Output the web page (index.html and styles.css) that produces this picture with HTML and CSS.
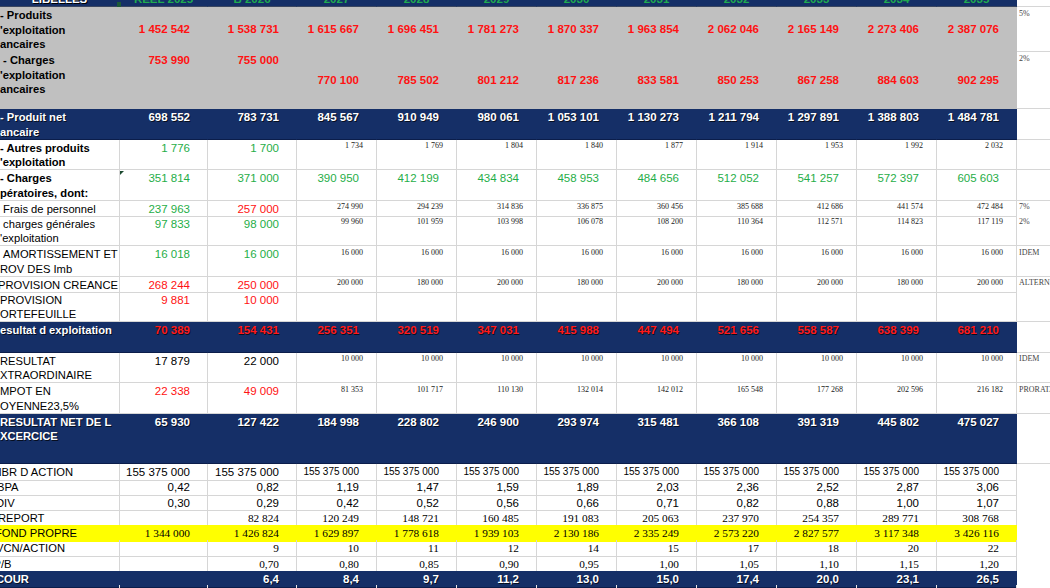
FILE: index.html
```html
<!DOCTYPE html>
<html lang="fr">
<head>
<meta charset="utf-8">
<title>Prévisions</title>
<link rel="stylesheet" href="styles.css">
</head>
<body>
<div class="sheet">
  <div class="row h7 head">
    <div class="c lab hl"><span class="w">LIBELLES</span></div>
    <div class="c hc sel"><span>REEL 2025</span><i class="handle"></i></div>
    <div class="c hc"><span>B 2026</span></div>
    <div class="c hc"><span>2027</span></div>
    <div class="c hc"><span>2028</span></div>
    <div class="c hc"><span>2029</span></div>
    <div class="c hc"><span>2030</span></div>
    <div class="c hc"><span>2031</span></div>
    <div class="c hc"><span>2032</span></div>
    <div class="c hc"><span>2033</span></div>
    <div class="c hc"><span>2034</span></div>
    <div class="c hc"><span>2035</span></div>
    <div class="c x"></div>
  </div>

  <div class="row h45 gray">
    <div class="c lab b">- Produits<br>'exploitation<br>ancaires</div>
    <div class="c b red m44">1 452 542</div>
    <div class="c b red m44">1 538 731</div>
    <div class="c b red m44">1 615 667</div>
    <div class="c b red m44">1 696 451</div>
    <div class="c b red m44">1 781 273</div>
    <div class="c b red m44">1 870 337</div>
    <div class="c b red m44">1 963 854</div>
    <div class="c b red m44">2 062 046</div>
    <div class="c b red m44">2 165 149</div>
    <div class="c b red m44">2 273 406</div>
    <div class="c b red m44">2 387 076</div>
    <div class="c x">5%</div>
  </div>

  <div class="row h57 gray">
    <div class="c lab b">&nbsp;- Charges<br>'exploitation<br>ancaires</div>
    <div class="c b red">753 990</div>
    <div class="c b red">755 000</div>
    <div class="c b red m56">770 100</div>
    <div class="c b red m56">785 502</div>
    <div class="c b red m56">801 212</div>
    <div class="c b red m56">817 236</div>
    <div class="c b red m56">833 581</div>
    <div class="c b red m56">850 253</div>
    <div class="c b red m56">867 258</div>
    <div class="c b red m56">884 603</div>
    <div class="c b red m56">902 295</div>
    <div class="c x">2%</div>
  </div>

  <div class="row h30 navy">
    <div class="c lab b">- Produit net<br>ancaire</div>
    <div class="c b">698 552</div>
    <div class="c b">783 731</div>
    <div class="c b">845 567</div>
    <div class="c b">910 949</div>
    <div class="c b">980 061</div>
    <div class="c b">1 053 101</div>
    <div class="c b">1 130 273</div>
    <div class="c b">1 211 794</div>
    <div class="c b">1 297 891</div>
    <div class="c b">1 388 803</div>
    <div class="c b">1 484 781</div>
    <div class="c x"></div>
  </div>

  <div class="row h30">
    <div class="c lab b">- Autres produits<br>'exploitation</div>
    <div class="c grn">1 776</div>
    <div class="c grn">1 700</div>
    <div class="c s">1 734</div>
    <div class="c s">1 769</div>
    <div class="c s">1 804</div>
    <div class="c s">1 840</div>
    <div class="c s">1 877</div>
    <div class="c s">1 914</div>
    <div class="c s">1 953</div>
    <div class="c s">1 992</div>
    <div class="c s">2 032</div>
    <div class="c x"></div>
  </div>

  <div class="row h30">
    <div class="c lab b">- Charges<br>pératoires, dont:</div>
    <div class="c grn cm">351 814</div>
    <div class="c grn">371 000</div>
    <div class="c grn">390 950</div>
    <div class="c grn">412 199</div>
    <div class="c grn">434 834</div>
    <div class="c grn">458 953</div>
    <div class="c grn">484 656</div>
    <div class="c grn">512 052</div>
    <div class="c grn">541 257</div>
    <div class="c grn">572 397</div>
    <div class="c grn">605 603</div>
    <div class="c x"></div>
  </div>

  <div class="row h15">
    <div class="c lab">&nbsp;Frais de personnel</div>
    <div class="c grn">237 963</div>
    <div class="c red">257 000</div>
    <div class="c s">274 990</div>
    <div class="c s">294 239</div>
    <div class="c s">314 836</div>
    <div class="c s">336 875</div>
    <div class="c s">360 456</div>
    <div class="c s">385 688</div>
    <div class="c s">412 686</div>
    <div class="c s">441 574</div>
    <div class="c s">472 484</div>
    <div class="c x">7%</div>
  </div>

  <div class="row h30">
    <div class="c lab">&nbsp;charges générales<br>'exploitation</div>
    <div class="c grn">97 833</div>
    <div class="c grn">98 000</div>
    <div class="c s">99 960</div>
    <div class="c s">101 959</div>
    <div class="c s">103 998</div>
    <div class="c s">106 078</div>
    <div class="c s">108 200</div>
    <div class="c s">110 364</div>
    <div class="c s">112 571</div>
    <div class="c s">114 823</div>
    <div class="c s">117 119</div>
    <div class="c x">2%</div>
  </div>

  <div class="row h30">
    <div class="c lab">&nbsp;AMORTISSEMENT ET<br>ROV DES Imb</div>
    <div class="c grn">16 018</div>
    <div class="c grn">16 000</div>
    <div class="c s">16 000</div>
    <div class="c s">16 000</div>
    <div class="c s">16 000</div>
    <div class="c s">16 000</div>
    <div class="c s">16 000</div>
    <div class="c s">16 000</div>
    <div class="c s">16 000</div>
    <div class="c s">16 000</div>
    <div class="c s">16 000</div>
    <div class="c x">IDEM</div>
  </div>

  <div class="row h15">
    <div class="c lab"><span class="k2">PROVISION CREANCE</span></div>
    <div class="c red">268 244</div>
    <div class="c red">250 000</div>
    <div class="c s">200 000</div>
    <div class="c s">180 000</div>
    <div class="c s">200 000</div>
    <div class="c s">180 000</div>
    <div class="c s">200 000</div>
    <div class="c s">180 000</div>
    <div class="c s">200 000</div>
    <div class="c s">180 000</div>
    <div class="c s">200 000</div>
    <div class="c x">ALTERNE</div>
  </div>

  <div class="row h30">
    <div class="c lab">PROVISION<br>ORTEFEUILLE</div>
    <div class="c red">9 881</div>
    <div class="c red">10 000</div>
    <div class="c"></div>
    <div class="c"></div>
    <div class="c"></div>
    <div class="c"></div>
    <div class="c"></div>
    <div class="c"></div>
    <div class="c"></div>
    <div class="c"></div>
    <div class="c"></div>
    <div class="c x"></div>
  </div>

  <div class="row h30 navy">
    <div class="c lab b">esultat d exploitation</div>
    <div class="c b red">70 389</div>
    <div class="c b red">154 431</div>
    <div class="c b red">256 351</div>
    <div class="c b red">320 519</div>
    <div class="c b red">347 031</div>
    <div class="c b red">415 988</div>
    <div class="c b red">447 494</div>
    <div class="c b red">521 656</div>
    <div class="c b red">558 587</div>
    <div class="c b red">638 399</div>
    <div class="c b red">681 210</div>
    <div class="c x"></div>
  </div>

  <div class="row h30">
    <div class="c lab">RESULTAT<br>XTRAORDINAIRE</div>
    <div class="c">17 879</div>
    <div class="c">22 000</div>
    <div class="c s">10 000</div>
    <div class="c s">10 000</div>
    <div class="c s">10 000</div>
    <div class="c s">10 000</div>
    <div class="c s">10 000</div>
    <div class="c s">10 000</div>
    <div class="c s">10 000</div>
    <div class="c s">10 000</div>
    <div class="c s">10 000</div>
    <div class="c x">IDEM</div>
  </div>

  <div class="row h30">
    <div class="c lab">MPOT EN<br>OYENNE23,5%</div>
    <div class="c red">22 338</div>
    <div class="c red">49 009</div>
    <div class="c s">81 353</div>
    <div class="c s">101 717</div>
    <div class="c s">110 130</div>
    <div class="c s">132 014</div>
    <div class="c s">142 012</div>
    <div class="c s">165 548</div>
    <div class="c s">177 268</div>
    <div class="c s">202 596</div>
    <div class="c s">216 182</div>
    <div class="c x">PRORATA</div>
  </div>

  <div class="row h50 navy">
    <div class="c lab b">RESULTAT NET DE L<br>XCERCICE</div>
    <div class="c b">65 930</div>
    <div class="c b">127 422</div>
    <div class="c b">184 998</div>
    <div class="c b">228 802</div>
    <div class="c b">246 900</div>
    <div class="c b">293 974</div>
    <div class="c b">315 481</div>
    <div class="c b">366 108</div>
    <div class="c b">391 319</div>
    <div class="c b">445 802</div>
    <div class="c b">475 027</div>
    <div class="c x"></div>
  </div>

  <div class="row h153">
    <div class="c lab"><span class="k6">NBR D ACTION</span></div>
    <div class="c">155 375 000</div>
    <div class="c">155 375 000</div>
    <div class="c n10">155 375 000</div>
    <div class="c n10">155 375 000</div>
    <div class="c n10">155 375 000</div>
    <div class="c n10">155 375 000</div>
    <div class="c n10">155 375 000</div>
    <div class="c n10">155 375 000</div>
    <div class="c n10">155 375 000</div>
    <div class="c n10">155 375 000</div>
    <div class="c n10">155 375 000</div>
    <div class="c x"></div>
  </div>

  <div class="row h153">
    <div class="c lab"><span class="k3">BPA</span></div>
    <div class="c">0,42</div>
    <div class="c">0,82</div>
    <div class="c">1,19</div>
    <div class="c">1,47</div>
    <div class="c">1,59</div>
    <div class="c">1,89</div>
    <div class="c">2,03</div>
    <div class="c">2,36</div>
    <div class="c">2,52</div>
    <div class="c">2,87</div>
    <div class="c">3,06</div>
    <div class="c x"></div>
  </div>

  <div class="row h153">
    <div class="c lab"><span class="k4">DIV</span></div>
    <div class="c">0,30</div>
    <div class="c">0,29</div>
    <div class="c">0,42</div>
    <div class="c">0,52</div>
    <div class="c">0,56</div>
    <div class="c">0,66</div>
    <div class="c">0,71</div>
    <div class="c">0,82</div>
    <div class="c">0,88</div>
    <div class="c">1,00</div>
    <div class="c">1,07</div>
    <div class="c x"></div>
  </div>

  <div class="row h153">
    <div class="c lab"><span class="k2">REPORT</span></div>
    <div class="c t"></div>
    <div class="c t">82 824</div>
    <div class="c t">120 249</div>
    <div class="c t">148 721</div>
    <div class="c t">160 485</div>
    <div class="c t">191 083</div>
    <div class="c t">205 063</div>
    <div class="c t">237 970</div>
    <div class="c t">254 357</div>
    <div class="c t">289 771</div>
    <div class="c t">308 768</div>
    <div class="c x"></div>
  </div>

  <div class="row h153 yel">
    <div class="c lab"><span class="k5">FOND PROPRE</span></div>
    <div class="c t">1 344 000</div>
    <div class="c t">1 426 824</div>
    <div class="c t">1 629 897</div>
    <div class="c t">1 778 618</div>
    <div class="c t">1 939 103</div>
    <div class="c t">2 130 186</div>
    <div class="c t">2 335 249</div>
    <div class="c t">2 573 220</div>
    <div class="c t">2 827 577</div>
    <div class="c t">3 117 348</div>
    <div class="c t">3 426 116</div>
    <div class="c x"></div>
  </div>

  <div class="row h153">
    <div class="c lab"><span class="k4">VCN/ACTION</span></div>
    <div class="c t"></div>
    <div class="c t">9</div>
    <div class="c t">10</div>
    <div class="c t">11</div>
    <div class="c t">12</div>
    <div class="c t">14</div>
    <div class="c t">15</div>
    <div class="c t">17</div>
    <div class="c t">18</div>
    <div class="c t">20</div>
    <div class="c t">22</div>
    <div class="c x"></div>
  </div>

  <div class="row h153">
    <div class="c lab"><span class="k6">P/B</span></div>
    <div class="c t"></div>
    <div class="c t">0,70</div>
    <div class="c t">0,80</div>
    <div class="c t">0,85</div>
    <div class="c t">0,90</div>
    <div class="c t">0,95</div>
    <div class="c t">1,00</div>
    <div class="c t">1,05</div>
    <div class="c t">1,10</div>
    <div class="c t">1,15</div>
    <div class="c t">1,20</div>
    <div class="c x"></div>
  </div>

  <div class="row h14 navy">
    <div class="c lab b"><span class="k4">COUR</span></div>
    <div class="c b"></div>
    <div class="c b">6,4</div>
    <div class="c b">8,4</div>
    <div class="c b">9,7</div>
    <div class="c b">11,2</div>
    <div class="c b">13,0</div>
    <div class="c b">15,0</div>
    <div class="c b">17,4</div>
    <div class="c b">20,0</div>
    <div class="c b">23,1</div>
    <div class="c b">26,5</div>
    <div class="c x"></div>
  </div>

  <div class="row h15 tail">
    <div class="c lab"></div>
    <div class="c"></div>
    <div class="c"></div>
    <div class="c"></div>
    <div class="c"></div>
    <div class="c"></div>
    <div class="c"></div>
    <div class="c"></div>
    <div class="c"></div>
    <div class="c"></div>
    <div class="c"></div>
    <div class="c"></div>
    <div class="c x"></div>
  </div>
</div>
</body>
</html>
```

FILE: styles.css
```css
html, body {
  margin: 0;
  padding: 0;
  background: #ffffff;
}
body {
  width: 1050px;
  height: 588px;
  overflow: hidden;
}
.sheet {
  width: 1050px;
}
.row {
  display: grid;
  grid-template-columns: 120px 88px 89px repeat(9, 80px) 33px;
}
.h7 { height: 7px; }
.h45 { height: 45px; }
.h57 { height: 57px; }
.h30 { height: 30.5px; }
.h15 { height: 15px; }
.h50 { height: 50.5px; }
.h153 { height: 15.3px; }
.h14 { height: 14px; }

.c {
  box-sizing: border-box;
  position: relative;
  border-right: 1px solid #d6d6d6;
  border-bottom: 1px solid #d6d6d6;
  padding: 1px 17px 0 0;
  text-align: right;
  font-family: "Liberation Sans", Arial, sans-serif;
  font-size: 11.5px;
  line-height: 14.5px;
  color: #000000;
  white-space: nowrap;
}
.lab {
  text-align: left;
  padding-right: 0;
  overflow: hidden;
  font-size: 11.2px;
}
.lab span { display: inline-block; }
.k2 { margin-left: -2px; }
.k3 { margin-left: -3px; }
.k4 { margin-left: -4px; }
.k5 { margin-left: -5px; }
.k6 { margin-left: -6.5px; }

.b { font-weight: bold; }
.red { color: #ff1212; }
.grn { color: #1fae48; }
.m44 { padding-top: 0; line-height: 44px; }
.m56 { padding-top: 0; line-height: 56px; }
.s {
  font-family: "Liberation Serif", "Times New Roman", serif;
  font-size: 8px;
  line-height: 10px;
  padding-top: 1.5px;
  padding-right: 13px;
  color: #222222;
}
.t {
  font-family: "Liberation Serif", "Times New Roman", serif;
  font-size: 11.3px;
}
.n10 { font-size: 10px; }

.x {
  border-right: none;
  text-align: left;
  overflow: hidden;
  padding: 1.5px 0 0 2px;
  font-family: "Liberation Serif", "Times New Roman", serif;
  font-size: 8px;
  line-height: 10px;
  color: #444444;
  background: #ffffff;
}

.gray .c:not(.x) {
  background: #c0c0c0;
  border-color: #c0c0c0;
}
.navy .c:not(.x) {
  background: #152f67;
  border-color: #152f67;
  border-bottom-color: #0b1d4a;
  color: #ffffff;
  text-shadow: 1px 1px 0 rgba(0, 0, 0, 0.7);
}
.navy .c.red { color: #ff1a1a; }
.yel .c:not(.x) {
  background: #ffff00;
  border-color: #ffff00;
}
.tail .c { border-bottom-color: #e6e6e6; border-right-color: #e6e6e6; }

.head .c:not(.x) {
  background: #152f67;
  border-color: #152f67;
  border-bottom-color: #3a4660;
  padding: 0;
  text-align: center;
  font-weight: bold;
  font-size: 11.5px;
  color: #1faa4f;
}
.head .c span {
  display: block;
  margin-top: -8.5px;
  line-height: 14px;
}
.head .hl {
  overflow: visible;
}
.head .hl .w {
  color: #ffffff;
  text-shadow: 1px 1px 0 #000000;
}
.handle {
  position: absolute;
  left: -3px;
  top: 2px;
  width: 4px;
  height: 5px;
  background: #1d5a38;
}
.cm::before {
  content: "";
  position: absolute;
  left: 0;
  top: 1px;
  border-top: 4px solid #1c4a30;
  border-right: 4px solid transparent;
}
```
